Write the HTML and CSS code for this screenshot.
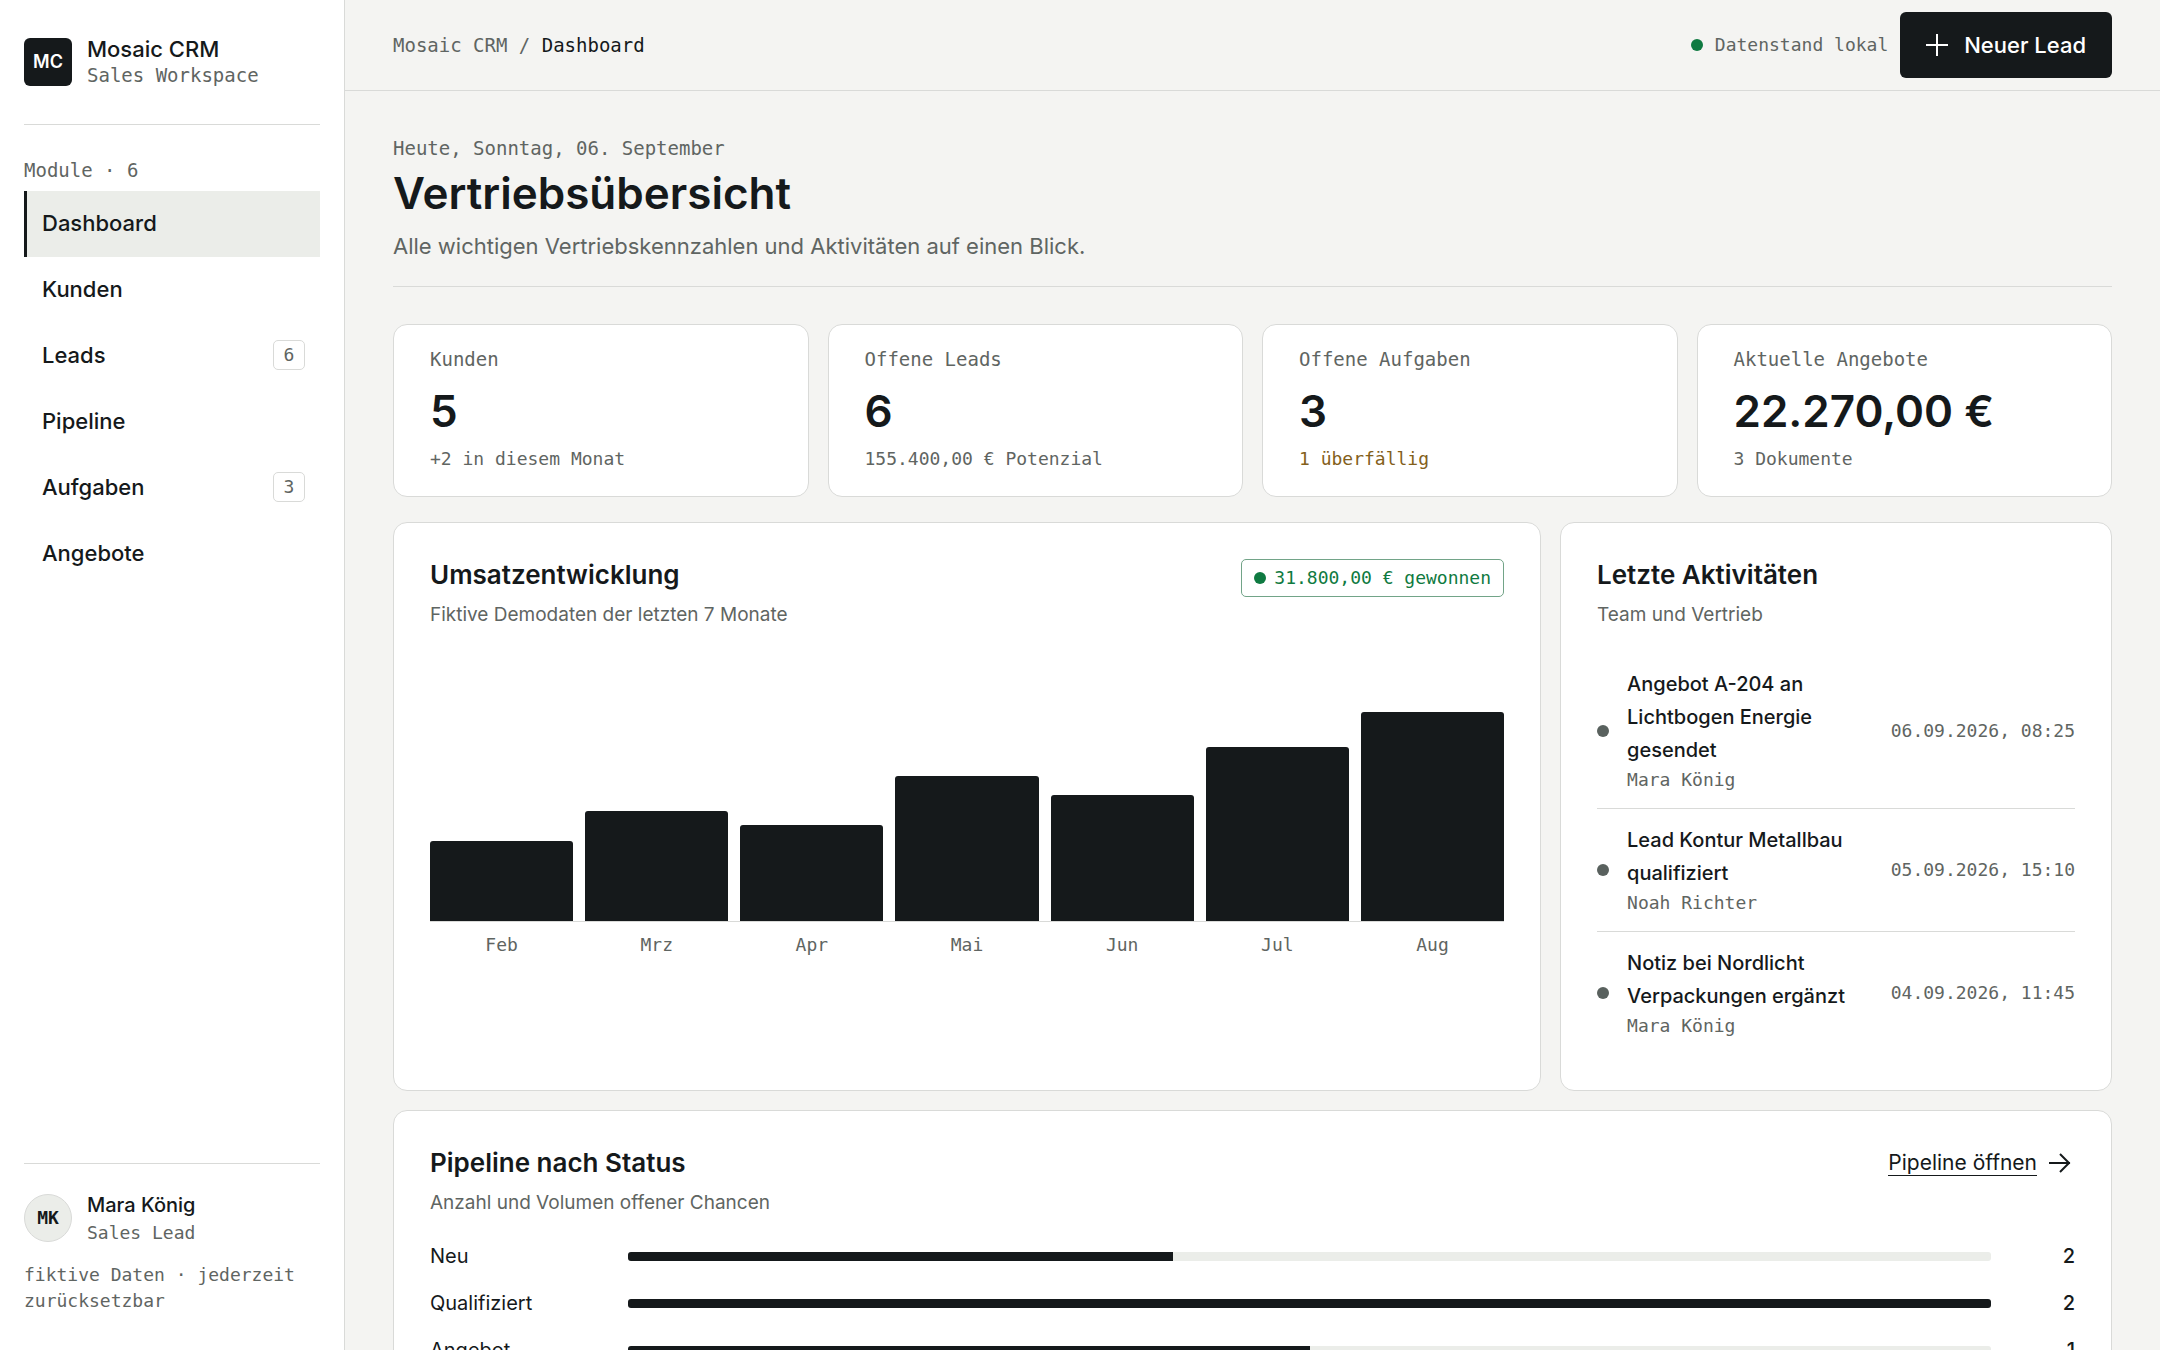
FILE: index.html
```
<!DOCTYPE html>
<html lang="de">
<head>
<meta charset="utf-8">
<meta name="viewport" content="width=device-width, initial-scale=1">
<title>Mosaic CRM – Dashboard</title>
<link rel="stylesheet" href="styles.css">
</head>
<body>
<div class="app">
  <aside class="sidebar">
    <div class="brand">
      <span class="brand-mark">MC</span>
      <div>
        <div class="brand-name">Mosaic CRM</div>
        <div class="brand-sub">Sales Workspace</div>
      </div>
    </div>
    <div class="nav-label">Module · 6</div>
    <nav class="nav" aria-label="Module">
      <a class="nav-item active" href="#dashboard" aria-current="page">Dashboard</a>
      <a class="nav-item" href="#kunden">Kunden</a>
      <a class="nav-item" href="#leads">Leads<span class="count">6</span></a>
      <a class="nav-item" href="#pipeline">Pipeline</a>
      <a class="nav-item" href="#aufgaben">Aufgaben<span class="count">3</span></a>
      <a class="nav-item" href="#angebote">Angebote</a>
    </nav>
    <div class="account">
      <div class="user">
        <span class="avatar">MK</span>
        <div>
          <div class="user-name">Mara König</div>
          <div class="user-role">Sales Lead</div>
        </div>
      </div>
      <p class="note">fiktive Daten · jederzeit zurücksetzbar</p>
    </div>
  </aside>

  <div class="workspace">
    <header class="topbar">
      <div class="crumbs">Mosaic CRM / <span class="crumb-current">Dashboard</span></div>
      <div class="top-actions">
        <span class="status"><span class="dot green"></span>Datenstand lokal</span>
        <button class="btn-primary" type="button">
          <svg width="22" height="22" viewBox="0 0 22 22" fill="none" stroke="currentColor" stroke-width="2" aria-hidden="true"><path d="M11 0v22M0 11h22"/></svg>
          Neuer Lead
        </button>
      </div>
    </header>

    <main class="content">
      <div class="page-head">
        <div class="eyebrow">Heute, Sonntag, 06. September</div>
        <h1>Vertriebsübersicht</h1>
        <p class="lead">Alle wichtigen Vertriebskennzahlen und Aktivitäten auf einen Blick.</p>
      </div>

      <section class="kpis" aria-label="Kennzahlen">
        <article class="card kpi">
          <div class="kpi-label">Kunden</div>
          <div class="kpi-value">5</div>
          <div class="kpi-foot">+2 in diesem Monat</div>
        </article>
        <article class="card kpi">
          <div class="kpi-label">Offene Leads</div>
          <div class="kpi-value">6</div>
          <div class="kpi-foot">155.400,00 € Potenzial</div>
        </article>
        <article class="card kpi">
          <div class="kpi-label">Offene Aufgaben</div>
          <div class="kpi-value">3</div>
          <div class="kpi-foot warn">1 überfällig</div>
        </article>
        <article class="card kpi">
          <div class="kpi-label">Aktuelle Angebote</div>
          <div class="kpi-value">22.270,00 €</div>
          <div class="kpi-foot">3 Dokumente</div>
        </article>
      </section>

      <div class="panels">
        <section class="card panel">
          <div class="panel-head">
            <div>
              <h2>Umsatzentwicklung</h2>
              <p class="panel-sub">Fiktive Demodaten der letzten 7 Monate</p>
            </div>
            <span class="chip"><span class="dot green"></span>31.800,00 € gewonnen</span>
          </div>
          <div class="plot">
            <div class="bar" style="height:30%"></div>
            <div class="bar" style="height:41%"></div>
            <div class="bar" style="height:36%"></div>
            <div class="bar" style="height:54%"></div>
            <div class="bar" style="height:47%"></div>
            <div class="bar" style="height:65%"></div>
            <div class="bar" style="height:78%"></div>
          </div>
          <div class="months">
            <span>Feb</span><span>Mrz</span><span>Apr</span><span>Mai</span><span>Jun</span><span>Jul</span><span>Aug</span>
          </div>
        </section>

        <section class="card panel">
          <div class="panel-head">
            <div>
              <h2>Letzte Aktivitäten</h2>
              <p class="panel-sub">Team und Vertrieb</p>
            </div>
          </div>
          <ul class="activities">
            <li class="activity">
              <span class="dot"></span>
              <div>
                <div class="act-title">Angebot A-204 an Lichtbogen Energie gesendet</div>
                <div class="act-by">Mara König</div>
              </div>
              <time class="act-time" datetime="2026-09-06T08:25">06.09.2026, 08:25</time>
            </li>
            <li class="activity">
              <span class="dot"></span>
              <div>
                <div class="act-title">Lead Kontur Metallbau qualifiziert</div>
                <div class="act-by">Noah Richter</div>
              </div>
              <time class="act-time" datetime="2026-09-05T15:10">05.09.2026, 15:10</time>
            </li>
            <li class="activity">
              <span class="dot"></span>
              <div>
                <div class="act-title">Notiz bei Nordlicht Verpackungen ergänzt</div>
                <div class="act-by">Mara König</div>
              </div>
              <time class="act-time" datetime="2026-09-04T11:45">04.09.2026, 11:45</time>
            </li>
          </ul>
        </section>
      </div>

      <section class="card panel pipeline">
        <div class="panel-head">
          <div>
            <h2>Pipeline nach Status</h2>
            <p class="panel-sub">Anzahl und Volumen offener Chancen</p>
          </div>
          <a class="more" href="#pipeline">
            <span class="more-text">Pipeline öffnen</span>
            <svg width="22" height="20" viewBox="0 0 22 20" fill="none" stroke="currentColor" stroke-width="2" aria-hidden="true"><path d="M0 10h21M11 1l9 9-9 9"/></svg>
          </a>
        </div>
        <div class="stages">
          <div class="stage"><span>Neu</span><div class="track"><div class="fill" style="width:40%"></div></div><span class="stage-value">2</span></div>
          <div class="stage"><span>Qualifiziert</span><div class="track"><div class="fill" style="width:100%"></div></div><span class="stage-value">2</span></div>
          <div class="stage"><span>Angebot</span><div class="track"><div class="fill" style="width:50%"></div></div><span class="stage-value">1</span></div>
        </div>
      </section>
    </main>
  </div>
</div>
</body>
</html>
```
FILE: styles.css
```
:root {
  --ink: #15191b;
  --muted: #5f6562;
  --line: #d9dad8;
  --paper: #f4f4f2;
  --soft: #ebede9;
  --green: #0f7a41;
  --amber: #83601b;
  --sans: Inter, "Liberation Sans", sans-serif;
  --mono: "DejaVu Sans Mono", "Liberation Mono", monospace;
}

* { box-sizing: border-box; }

body {
  margin: 0;
  background: var(--paper);
  color: var(--ink);
  font-family: var(--sans);
  font-size: 20px;
  line-height: 30px;
}

h1, h2, p, ul { margin: 0; padding: 0; }

.app { display: flex; height: 100vh; }

/* Sidebar */
.sidebar {
  display: flex;
  flex-direction: column;
  flex: none;
  width: 345px;
  padding: 36px 24px;
  background: #fff;
  border-right: 1px solid var(--line);
}

.brand {
  display: flex;
  align-items: center;
  gap: 15px;
  padding-bottom: 36px;
  border-bottom: 1px solid var(--line);
}

.brand-mark {
  display: grid;
  place-items: center;
  width: 48px;
  height: 48px;
  border-radius: 6px;
  background: var(--ink);
  color: #fff;
  font-size: 18px;
  font-weight: 600;
}

.brand-name { font-size: 22px; font-weight: 500; line-height: 26px; }
.brand-sub { color: var(--muted); font: 19px/26px var(--mono); }

.nav-label {
  padding: 32px 0 8px;
  color: var(--muted);
  font: 19px/26px var(--mono);
}

.nav-item {
  display: flex;
  align-items: center;
  justify-content: space-between;
  height: 66px;
  padding: 0 15px;
  padding-bottom: 2px;
  border-left: 3px solid transparent;
  color: var(--ink);
  font-size: 22px;
  font-weight: 500;
  text-decoration: none;
}

.nav-item.active { background: var(--soft); border-left-color: var(--ink); }

.count {
  display: grid;
  place-items: center;
  width: 32px;
  height: 30px;
  border: 1px solid var(--line);
  border-radius: 5px;
  color: var(--muted);
  font: 18px/26px var(--mono);
}

.account {
  margin-top: auto;
  padding-top: 26px;
  border-top: 1px solid var(--line);
}

.user { display: flex; align-items: center; gap: 15px; margin-bottom: 16px; }

.avatar {
  display: grid;
  place-items: center;
  width: 48px;
  height: 48px;
  border: 1px solid var(--line);
  border-radius: 50%;
  background: var(--soft);
  font: bold 18px/26px var(--mono);
}

.user-name { font-weight: 500; }
.user-role, .note { color: var(--muted); font: 18px/26px var(--mono); }

/* Top bar */
.workspace {
  flex: 1;
  min-width: 0;
  overflow-y: auto;
  scrollbar-width: none;
}

.topbar {
  display: flex;
  align-items: center;
  justify-content: space-between;
  padding: 12px 48px;
  border-bottom: 1px solid var(--line);
}

.crumbs { color: var(--muted); font: 19px/26px var(--mono); }
.crumb-current { color: var(--ink); }
.top-actions { display: flex; align-items: center; gap: 12px; }

.status {
  display: flex;
  align-items: center;
  gap: 12px;
  color: var(--muted);
  font: 18px/26px var(--mono);
}

.dot {
  flex: none;
  width: 12px;
  height: 12px;
  border-radius: 50%;
  background: #59615e;
}

.dot.green { background: var(--green); }

.btn-primary {
  display: flex;
  align-items: center;
  gap: 16px;
  height: 66px;
  padding: 0 26px;
  border: 0;
  border-radius: 6px;
  background: var(--ink);
  color: #fff;
  font: 500 22px/30px var(--sans);
}

/* Page */
.content { padding: 44px 48px 48px; }

.page-head {
  margin-bottom: 37px;
  padding-bottom: 22px;
  border-bottom: 1px solid var(--line);
}

.eyebrow { color: var(--muted); font: 19px/26px var(--mono); }
h1 { padding: 5px 0 8px; font-size: 44px; font-weight: 600; line-height: 54px; }
.lead { color: var(--muted); font-size: 22px; line-height: 36px; }

.card {
  background: #fff;
  border: 1px solid var(--line);
  border-radius: 14px;
}

.kpis {
  display: grid;
  grid-template-columns: repeat(4, minmax(0, 1fr));
  gap: 19px;
  margin-bottom: 25px;
}

.kpi { padding: 21px 36px 24px; }
.kpi-label { color: var(--muted); font: 19px/26px var(--mono); }
.kpi-value { padding: 14px 0 10px; font-size: 44px; font-weight: 600; line-height: 50px; }
.kpi-foot { color: var(--muted); font: 18px/26px var(--mono); }
.kpi-foot.warn { color: var(--amber); }

.panels {
  display: grid;
  grid-template-columns: minmax(0, 208fr) minmax(0, 100fr);
  gap: 19px;
  margin-bottom: 19px;
}

.panel { padding: 36px; }

.panel-head {
  display: flex;
  align-items: flex-start;
  justify-content: space-between;
  margin-bottom: 24px;
}

h2 { font-size: 26px; font-weight: 600; line-height: 32px; }
.panel-sub { padding-top: 10px; color: var(--muted); font-size: 19px; line-height: 28px; }

.chip {
  display: flex;
  align-items: center;
  gap: 8px;
  padding: 5px 12px;
  border: 1px solid #72a488;
  border-radius: 5px;
  color: var(--green);
  font: 18px/26px var(--mono);
}

.plot, .months {
  display: grid;
  grid-template-columns: repeat(7, minmax(0, 1fr));
  gap: 12px;
}

.plot {
  align-items: end;
  height: 269px;
  border-bottom: 1px solid var(--line);
}

.bar { border-radius: 3px 3px 0 0; background: var(--ink); }

.months {
  padding-top: 10px;
  color: var(--muted);
  font: 18px/26px var(--mono);
  text-align: center;
}

.activities { list-style: none; }

.activity {
  display: grid;
  grid-template-columns: 12px minmax(0, 1fr) auto;
  align-items: center;
  gap: 18px;
  padding: 15px 0;
  border-bottom: 1px solid var(--line);
}

.activity:last-child { border-bottom: 0; }
.act-title { font-weight: 500; line-height: 33px; }
.act-by, .act-time { color: var(--muted); font: 18px/26px var(--mono); }

/* Pipeline */
.more {
  display: flex;
  align-items: center;
  gap: 12px;
  padding: 3px 4px 0 0;
  color: var(--ink);
  font-size: 21px;
  text-decoration: none;
}

.more-text { border-bottom: 1px solid var(--ink); line-height: 25px; }

.stages { display: grid; gap: 17px; }

.stage {
  display: grid;
  grid-template-columns: 180px minmax(0, 1fr) 66px;
  align-items: center;
  gap: 18px;
}

.track { height: 9px; overflow: hidden; border-radius: 3px; background: var(--soft); }
.fill { height: 100%; background: var(--ink); }
.stage-value { font-weight: 500; text-align: right; }
```
